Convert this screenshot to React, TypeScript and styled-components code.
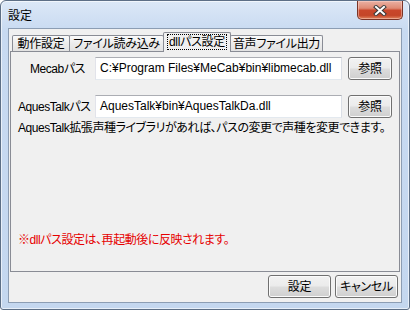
import React from "react";
import styled, { createGlobalStyle } from "styled-components";

// 設定ダイアログ (dllパス設定タブ)
const GlobalStyle = createGlobalStyle`
  html, body {
    margin: 0;
    padding: 0;
    background: #ffffff;
  }
  body {
    font-family: "Liberation Sans", "Noto Sans CJK JP", sans-serif;
    font-size: 12px;
    font-feature-settings: "palt";
    color: #000;
  }
`;

function CloseIcon() {
  return (
    <svg width="14" height="11" viewBox="0 0 14 11">
      <path d="M3 2 L11 9 M11 2 L3 9" stroke="#3a3a3a" strokeWidth="4" strokeLinecap="square" />
      <path d="M3 2 L11 9 M11 2 L3 9" stroke="#ffffff" strokeWidth="2" strokeLinecap="square" />
    </svg>
  );
}

function App() {
  return (
    <>
      <GlobalStyle />
      <Window>
        <TitleBar>
          <Title>設定</Title>
          <CloseButton>
            <CloseIcon />
          </CloseButton>
        </TitleBar>
        <Client>
          <TabStrip>
            <Tab $w={58}>動作設定</Tab>
            <Tab $w={95}>ファイル読み込み</Tab>
            <Tab $w={68} $active>
              <Focus>dllパス設定</Focus>
            </Tab>
            <Tab $w={93}>音声ファイル出力</Tab>
          </TabStrip>
          <Panel>
            <Row>
              <Label $indent={12}>Mecabパス</Label>
              <TextBox>C:¥Program Files¥MeCab¥bin¥libmecab.dll</TextBox>
              <Button $w={44}>参照</Button>
            </Row>
            <Row $top={15}>
              <Label>AquesTalkパス</Label>
              <TextBox>AquesTalk¥bin¥AquesTalkDa.dll</TextBox>
              <Button $w={44}>参照</Button>
            </Row>
            <Note>AquesTalk拡張声種ライブラリがあれば、パスの変更で声種を変更できます。</Note>
            <Warning>※dllパス設定は、再起動後に反映されます。</Warning>
          </Panel>
          <ButtonBar>
            <Button $w={63}>設定</Button>
            <Button $w={63}>キャンセル</Button>
          </ButtonBar>
        </Client>
      </Window>
    </>
  );
}

export default App;

const Window = styled.div`
  width: 410px;
  height: 310px;
  box-sizing: border-box;
  border: 1px solid #5d6f86;
  border-radius: 6px 6px 3px 3px;
  background: linear-gradient(180deg, #dce8f7 0px, #c8daf1 30px, #c4d7ef 100%);
  display: flex;
  flex-direction: column;
  padding: 0 7px 6px 7px;
  box-shadow: inset 0 0 0 1px rgba(255, 255, 255, 0.6);
`;

const TitleBar = styled.div`
  height: 27px;
  display: flex;
  justify-content: space-between;
  align-items: flex-start;
`;

const Title = styled.div`
  padding-top: 7px;
  font-family: "Noto Sans CJK JP", sans-serif;
  font-size: 12px;
  line-height: 14px;
`;

const CloseButton = styled.div`
  width: 46px;
  height: 19px;
  box-sizing: border-box;
  margin-right: -1px;
  border: 1px solid #7a3426;
  border-top: none;
  border-radius: 0 0 5px 5px;
  background: linear-gradient(
    180deg,
    #eab1a3 0%,
    #df8a74 40%,
    #c9472b 52%,
    #c44528 80%,
    #e0845e 100%
  );
  box-shadow: inset 0 0 0 1px rgba(255, 220, 210, 0.45);
  display: flex;
  align-items: center;
  justify-content: center;
`;

const Client = styled.div`
  flex: 1;
  box-sizing: border-box;
  border: 1px solid #8c9db3;
  background: #f0f0f0;
  display: flex;
  flex-direction: column;
  padding: 3px 1px 4px 1px;
`;

const TabStrip = styled.div`
  height: 19px;
  display: flex;
  align-items: flex-end;
  padding-left: 2px;
  position: relative;
  z-index: 1;
`;

const Tab = styled.div<{ $w: number; $active?: boolean }>`
  width: ${(p) => p.$w}px;
  height: ${(p) => (p.$active ? 20 : 16)}px;
  box-sizing: border-box;
  margin-left: -1px;
  margin-bottom: ${(p) => (p.$active ? -1 : 0)}px;
  border: 1px solid #898c95;
  border-bottom: none;
  border-radius: 2px 2px 0 0;
  background: ${(p) =>
    p.$active ? "#f0f0f0" : "linear-gradient(180deg, #fafafa 0%, #ececec 50%, #e2e2e2 100%)"};
  display: flex;
  align-items: ${(p) => (p.$active ? "flex-start" : "center")};
  justify-content: center;
  padding-top: ${(p) => (p.$active ? 2 : 0)}px;
  font-size: 12px;
  line-height: 14px;
  letter-spacing: -0.3px;
  white-space: nowrap;
  position: relative;
  z-index: ${(p) => (p.$active ? 2 : 1)};
  &:first-child {
    margin-left: 0;
  }
`;

const Focus = styled.span`
  outline: 1px dotted #000;
  outline-offset: 0px;
  padding: 0 1px;
`;

const Panel = styled.div`
  height: 221px;
  box-sizing: border-box;
  border: 1px solid #898c95;
  background: #f0f0f0;
  padding: 5px 7px;
  display: flex;
  flex-direction: column;
`;

const Row = styled.div<{ $top?: number }>`
  display: flex;
  align-items: center;
  height: 23px;
  margin-top: ${(p) => p.$top ?? 0}px;
`;

const Label = styled.div<{ $indent?: number }>`
  width: 77px;
  box-sizing: border-box;
  padding-left: ${(p) => p.$indent ?? 0}px;
  white-space: nowrap;
  line-height: 14px;
  letter-spacing: -0.45px;
`;

const TextBox = styled.div`
  width: 247px;
  height: 23px;
  box-sizing: border-box;
  border: 1px solid;
  border-color: #abadb3 #dbdfe6 #e3e9ef #e2e3ea;
  background: #ffffff;
  padding: 0 4px;
  line-height: 21px;
  white-space: nowrap;
  overflow: hidden;
`;

const Button = styled.div<{ $w: number }>`
  width: ${(p) => p.$w}px;
  height: 23px;
  box-sizing: border-box;
  margin-left: 6px;
  border: 1px solid #707070;
  border-radius: 3px;
  background: linear-gradient(180deg, #f2f2f2 0%, #ebebeb 48%, #dddddd 52%, #cfcfcf 100%);
  box-shadow: inset 0 0 0 1px #fbfbfb;
  display: flex;
  align-items: center;
  justify-content: center;
  line-height: 14px;
  letter-spacing: -0.3px;
  white-space: nowrap;
`;

const Note = styled.div`
  margin-top: 3px;
  line-height: 14px;
  letter-spacing: -0.45px;
  white-space: nowrap;
`;

const Warning = styled.div`
  margin-top: 98px;
  line-height: 14px;
  letter-spacing: -0.45px;
  color: #e60000;
  white-space: nowrap;
`;

const ButtonBar = styled.div`
  display: flex;
  justify-content: flex-end;
  margin-top: 3px;
  padding-right: 2px;
  & > div + div {
    margin-left: 4px;
  }
`;
